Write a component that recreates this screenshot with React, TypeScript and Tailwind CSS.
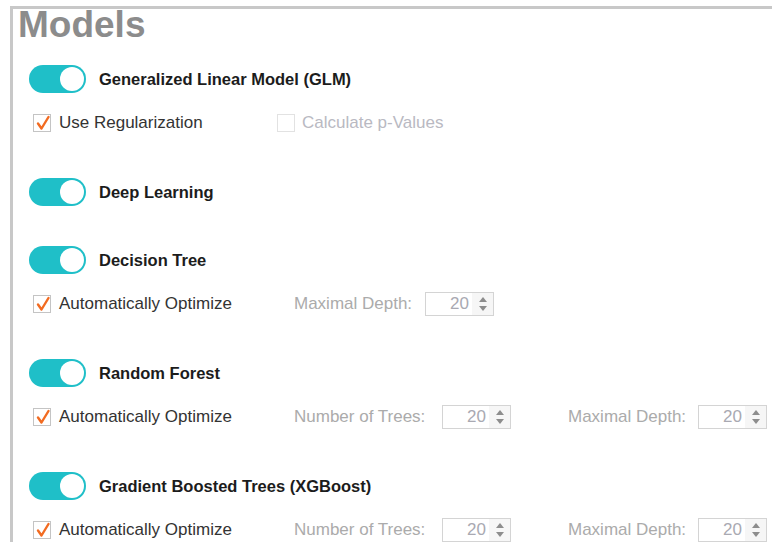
import React from 'react';

type Spin = { label: string; labelWidth: number; value: number };

const Toggle: React.FC = () => (
  <div className="relative h-[28px] w-[57px] shrink-0 rounded-full bg-[#1fbfc8]">
    <div className="absolute right-[2px] top-[2px] h-[24px] w-[24px] rounded-full bg-white" />
  </div>
);

const Checkbox: React.FC<{ checked?: boolean; disabled?: boolean }> = ({ checked, disabled }) => (
  <div
    className={
      'relative h-[18px] w-[18px] shrink-0 border bg-white ' +
      (disabled ? 'border-[#e2e2e2]' : 'border-[#c4c4c4]')
    }
  >
    {checked && (
      <svg className="absolute left-[-1px] top-[-1px] overflow-visible" width="18" height="18" viewBox="0 0 18 18">
        <polyline points="5,9.5 8.5,14.5 15.5,3" fill="none" stroke="#f26b21" strokeWidth="2.4" strokeLinecap="round" strokeLinejoin="round" />
      </svg>
    )}
  </div>
);

const Spinner: React.FC<Spin & { className?: string }> = ({ label, labelWidth, value, className }) => (
  <div className={'flex items-center ' + (className ?? '')}>
    <span className="text-[17px] text-[#ababab]" style={{ width: labelWidth }}>
      {label}
    </span>
    <div className="flex h-[24px] w-[69px] border border-[#d4d4d4] bg-white">
      <div className="flex flex-1 items-center justify-end pr-[3px] text-[17px] text-[#a9a9b2]">{value}</div>
      <div className="flex w-[21px] flex-col items-center justify-center gap-[4px] bg-[#f6f6f6]">
        <svg width="8" height="5" viewBox="0 0 8 5">
          <polygon points="4,0 8,5 0,5" fill="#8d8d8d" />
        </svg>
        <svg width="8" height="5" viewBox="0 0 8 5">
          <polygon points="0,0 8,0 4,5" fill="#8d8d8d" />
        </svg>
      </div>
    </div>
  </div>
);

const Model: React.FC<{ title: string; check?: string; spins?: Spin[]; pvalues?: boolean }> = ({
  title,
  check,
  spins,
  pvalues,
}) => (
  <section>
    <div className="flex h-[28px] items-center gap-[13px]">
      <Toggle />
      <span className="text-[16.5px] font-bold text-[#1c1c1c]">{title}</span>
    </div>
    {check && (
      <div className="mt-[16px] flex h-[28px] items-center">
        <div className={'flex items-center gap-[8px] pl-[4px] ' + (pvalues ? 'w-[248px]' : 'w-[265px]')}>
          <Checkbox checked />
          <span className="text-[17px] text-[#333]">{check}</span>
        </div>
        {pvalues && (
          <div className="flex items-center gap-[7px]">
            <Checkbox disabled />
            <span className="text-[17px] text-[#b9b9c2]">Calculate p-Values</span>
          </div>
        )}
        {spins?.map((s, i) => (
          <Spinner key={i} {...s} className={i > 0 ? 'ml-[57px]' : ''} />
        ))}
      </div>
    )}
  </section>
);

const trees: Spin = { label: 'Number of Trees:', labelWidth: 148, value: 20 };
const depth: Spin = { label: 'Maximal Depth:', labelWidth: 131, value: 20 };
const depth2: Spin = { label: 'Maximal Depth:', labelWidth: 130, value: 20 };

const App: React.FC = () => {
  return (
    <div className="h-[542px] w-[772px] overflow-hidden bg-white pl-[10px] pt-[6px] font-['Liberation_Sans',Arial,sans-serif]">
      <div className="h-full border-l-[3px] border-t-[3px] border-[#c8c8c8]">
        <h1 className="-mt-[3px] ml-[5px] h-[34px] text-[37px] font-bold leading-[37px] text-[#8c8c8c]">Models</h1>
        <div className="mt-[25px] flex flex-col gap-[41px] pl-[16px]">
          <Model title="Generalized Linear Model (GLM)" check="Use Regularization" pvalues />
          {/* no options row here, so the gap below is a little tighter */}
          <div className="-mb-[1px]">
            <Model title="Deep Learning" />
          </div>
          <Model title="Decision Tree" check="Automatically Optimize" spins={[depth]} />
          <Model title="Random Forest" check="Automatically Optimize" spins={[trees, depth2]} />
          <Model title="Gradient Boosted Trees (XGBoost)" check="Automatically Optimize" spins={[trees, depth2]} />
        </div>
      </div>
    </div>
  );
};

export default App;
